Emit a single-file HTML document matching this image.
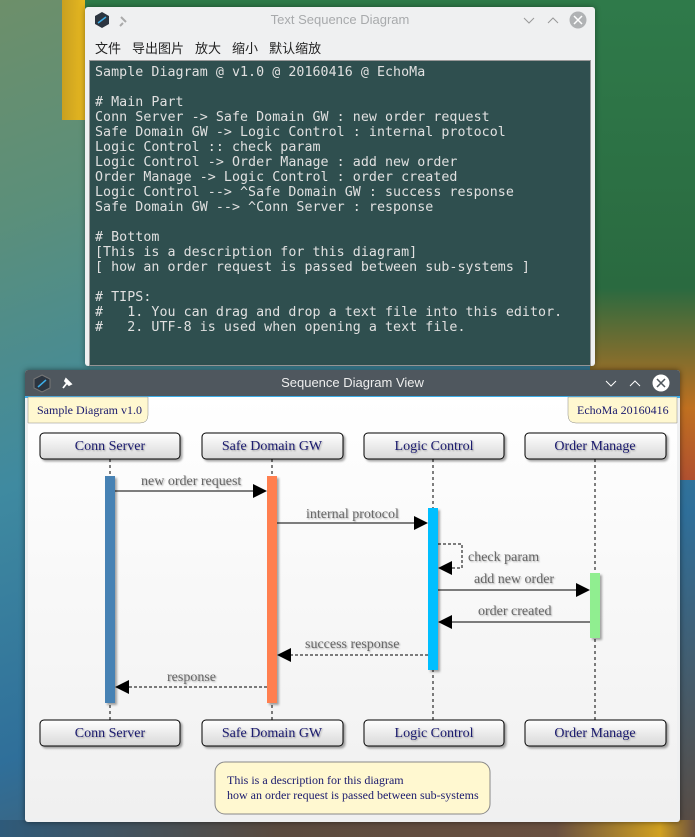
<!DOCTYPE html>
<html><head><meta charset="utf-8"><style>
body{margin:0;width:695px;height:837px;overflow:hidden;position:relative;font-family:"Liberation Sans","Noto Sans CJK SC",sans-serif;
background:linear-gradient(160deg,#6d8f6a 0%,#5b8f7a 20%,#3f8aa0 45%,#2f6f9a 70%,#5a4a40 100%);}
.bg1{position:absolute;left:62px;top:0;width:30px;height:120px;background:linear-gradient(90deg,#c9a020,#f0c020);}
.bg2{position:absolute;left:590px;top:0;width:105px;height:480px;background:linear-gradient(180deg,#2f7a4a,#2a6a40 60%,#c07020 85%,#b05030);}
.bg3{position:absolute;left:85px;top:0;width:520px;height:10px;background:#2e7a48;}
.bg4{position:absolute;left:0;top:820px;width:695px;height:17px;background:linear-gradient(90deg,#2e5a7a,#5a4a3e 40%,#6a5040 80%,#d0a020 95%,#6a5040);}
.win1{position:absolute;left:85px;top:7px;width:510px;height:359px;background:#eff0f1;border-radius:3px;box-shadow:0 0 6px rgba(0,0,0,.4);}
.t1{position:absolute;left:0;top:0;width:510px;height:26px;text-align:center;line-height:26px;font-size:13px;color:#a8aaac;}
.menu{position:absolute;left:10px;top:31px;font-size:13px;color:#222;}
.menu span{margin-right:11px}
.ed{position:absolute;left:4px;top:53px;width:500px;height:304px;background:#2f4f4f;border:1px solid #999;}
.ed pre{margin:0;padding:4px 0 0 5px;font-family:"DejaVu Sans Mono","Liberation Mono",monospace;font-size:13.3px;line-height:15px;color:#e0e0e0;letter-spacing:0.05px}
.win2{position:absolute;left:25px;top:370px;width:655px;height:452px;background:#eff0f1;border-radius:3px;box-shadow:0 0 6px rgba(0,0,0,.5);overflow:hidden}
.t2{position:absolute;left:0;top:0;width:655px;height:26px;background:#4f575e;border-bottom:2px solid #3daee9;color:#eee;text-align:center;line-height:26px;font-size:13px;}
svg text{font-family:"Liberation Serif",serif}
</style></head><body>
<div class="bg1"></div><div class="bg3"></div><div class="bg2"></div><div class="bg4"></div>
<div class="win1">
<svg style="position:absolute;left:8px;top:4px" width="40" height="18"><polygon points="9,1 16,5 16,13 9,17 2,13 2,5" fill="#2c3540"/><line x1="5" y1="12" x2="13" y2="6" stroke="#3daee9" stroke-width="1.5"/><path d="M28 6 l5 5 M30 12 l-3 3" stroke="#aaa" stroke-width="2"/></svg>
<div class="t1">Text Sequence Diagram</div>
<svg style="position:absolute;left:436px;top:4px" width="70" height="20"><path d="M3 7 l5 5 l5 -5" stroke="#999" fill="none"/><path d="M27 12 l5 -5 l5 5" stroke="#999" fill="none"/><circle cx="57" cy="9" r="8.5" fill="#b0b2b4"/><path d="M53 5 l8 8 M61 5 l-8 8" stroke="#fff" stroke-width="1.5"/></svg>
<div class="menu"><span>文件</span><span>导出图片</span><span>放大</span><span>缩小</span><span>默认缩放</span></div>
<div class="ed"><pre>Sample Diagram @ v1.0 @ 20160416 @ EchoMa

# Main Part
Conn Server -> Safe Domain GW : new order request
Safe Domain GW -> Logic Control : internal protocol
Logic Control :: check param
Logic Control -> Order Manage : add new order
Order Manage -> Logic Control : order created
Logic Control --> ^Safe Domain GW : success response
Safe Domain GW --> ^Conn Server : response

# Bottom
[This is a description for this diagram]
[ how an order request is passed between sub-systems ]

# TIPS:
#   1. You can drag and drop a text file into this editor.
#   2. UTF-8 is used when opening a text file.</pre></div>
</div>
<div class="win2">
<div class="t2">Sequence Diagram View</div>
<svg style="position:absolute;left:8px;top:4px" width="40" height="20"><polygon points="9,1 17,5 17,14 9,18 1,14 1,5" fill="#2c3540" stroke="#777"/><line x1="5" y1="13" x2="13" y2="6" stroke="#3daee9" stroke-width="1.5"/><path d="M33 5 l5 5 l-2 1 l-4 -4 Z M34 9 l-4 5" stroke="#fff" stroke-width="1.8" fill="#fff"/></svg>
<svg style="position:absolute;left:578px;top:4px" width="76" height="20"><path d="M3 7 l5 5 l5 -5" stroke="#fff" fill="none"/><path d="M27 12 l5 -5 l5 5" stroke="#fff" fill="none"/><circle cx="58" cy="9" r="8.5" fill="#fff"/><path d="M54 5 l8 8 M62 5 l-8 8" stroke="#4f575e" stroke-width="1.5"/></svg>
<svg style="position:absolute;left:0;top:0" width="655" height="452" viewBox="25 370 655 452">
<defs><linearGradient id="g" x1="0" y1="0" x2="0" y2="1"><stop offset="0" stop-color="#fff"/><stop offset="1" stop-color="#f0f0f0"/></linearGradient>
<linearGradient id="b" x1="0" y1="0" x2="0" y2="1"><stop offset="0" stop-color="#fff"/><stop offset="1" stop-color="#d8d8d8"/></linearGradient>
<filter id="s"><feDropShadow dx="2" dy="2" stdDeviation="1" flood-color="#000" flood-opacity=".35"/></filter>
<filter id="ts"><feDropShadow dx="1" dy="1" stdDeviation="0.8" flood-color="#000" flood-opacity=".3"/></filter></defs>
<rect x="28" y="397" width="649" height="421" fill="url(#g)"/>
<path d="M28 397 H148 V415 Q148 423 140 423 H28 Z" fill="#fff8d0" stroke="#888" stroke-width=".5"/>
<text x="37" y="414" font-size="12" fill="#1a1a6e">Sample Diagram v1.0</text>
<path d="M677 397 H568 V415 Q568 423 576 423 H677 Z" fill="#fff8d0" stroke="#888" stroke-width=".5"/>
<text x="577" y="414" font-size="12" fill="#1a1a6e">EchoMa 20160416</text>
<g stroke="#000" stroke-dasharray="3,3"><line x1="110" y1="459" x2="110" y2="720"/><line x1="272" y1="459" x2="272" y2="720"/><line x1="433" y1="459" x2="433" y2="720"/><line x1="595" y1="459" x2="595" y2="720"/></g>
<g fill="url(#b)" stroke="#000" filter="url(#s)">
<rect x="40" y="433" width="140" height="26" rx="4"/><rect x="202" y="433" width="141" height="26" rx="4"/><rect x="364" y="433" width="140" height="26" rx="4"/><rect x="525" y="433" width="141" height="26" rx="4"/>
<rect x="40" y="720" width="140" height="26" rx="4"/><rect x="202" y="720" width="141" height="26" rx="4"/><rect x="364" y="720" width="140" height="26" rx="4"/><rect x="525" y="720" width="141" height="26" rx="4"/></g>
<g font-size="14" fill="#1a1a6e" text-anchor="middle" filter="url(#ts)">
<text x="110" y="450">Conn Server</text><text x="272" y="450">Safe Domain GW</text><text x="434" y="450">Logic Control</text><text x="595" y="450">Order Manage</text>
<text x="110" y="737">Conn Server</text><text x="272" y="737">Safe Domain GW</text><text x="434" y="737">Logic Control</text><text x="595" y="737">Order Manage</text></g>
<g filter="url(#s)"><rect x="105" y="476" width="10" height="227" fill="#4682b4"/><rect x="267" y="476" width="10" height="227" fill="#ff7f50"/><rect x="428" y="508" width="10" height="162" fill="#00bfff"/><rect x="590" y="573" width="10" height="65" fill="#90ee90"/></g>
<g stroke="#000" fill="none"><line x1="115" y1="491" x2="253" y2="491"/><line x1="277" y1="523" x2="414" y2="523"/><path d="M438 544 H462 V568 H452" stroke-dasharray="3,2"/><line x1="438" y1="590" x2="576" y2="590"/><line x1="590" y1="622" x2="452" y2="622"/><line x1="428" y1="655" x2="291" y2="655" stroke-dasharray="3,2"/><line x1="267" y1="687" x2="129" y2="687" stroke-dasharray="3,2"/></g>
<g fill="#000"><polygon points="253,484 267,491 253,498"/><polygon points="414,516 428,523 414,530"/><polygon points="452,561 438,568 452,575"/><polygon points="576,583 590,590 576,597"/><polygon points="452,615 438,622 452,629"/><polygon points="291,648 277,655 291,662"/><polygon points="129,680 115,687 129,694"/></g>
<g font-size="14" fill="#666" filter="url(#ts)">
<text x="141" y="485">new order request</text><text x="306" y="518">internal protocol</text><text x="468" y="561">check param</text><text x="474" y="583">add new order</text><text x="478" y="615">order created</text><text x="305" y="648">success response</text><text x="167" y="681">response</text></g>
<rect x="215" y="762" width="275" height="52" rx="10" fill="#fff8d0" stroke="#888"/>
<g font-size="12" fill="#1a1a6e"><text x="227" y="784">This is a description for this diagram</text><text x="227" y="799">how an order request is passed between sub-systems</text></g>
</svg>
</div>
</body></html>
